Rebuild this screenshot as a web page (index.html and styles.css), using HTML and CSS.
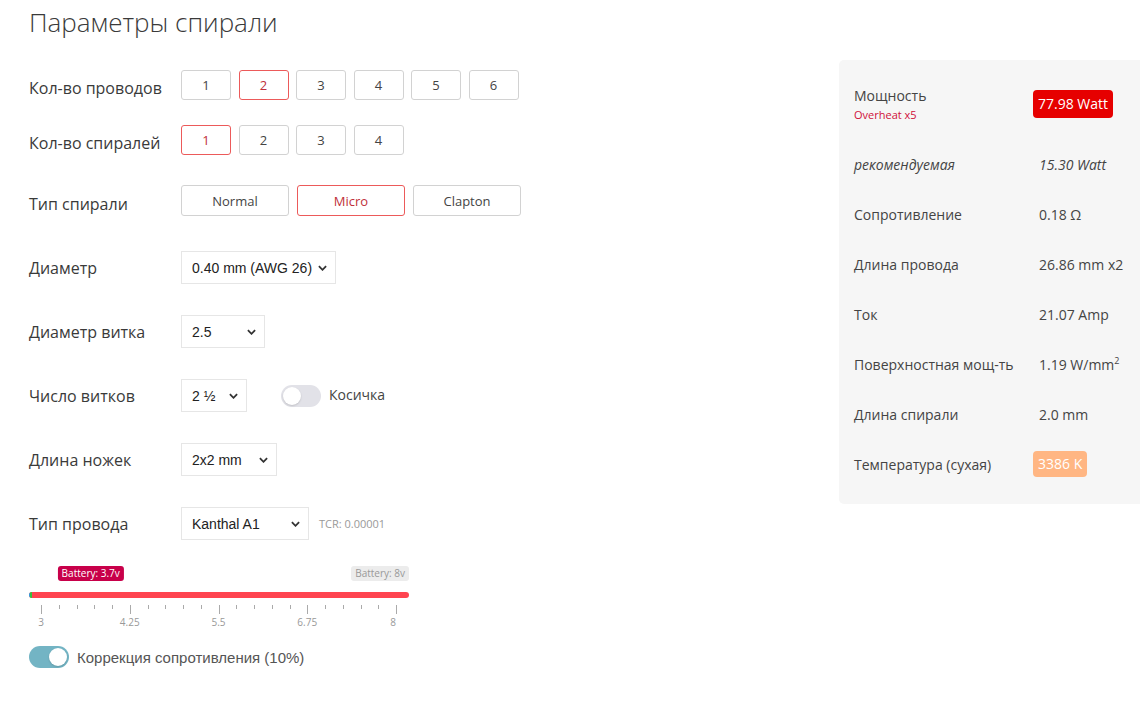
FILE: index.html
```html
<!DOCTYPE html>
<html lang="ru">
<head>
    <meta charset="UTF-8">
    <meta name="viewport" content="width=device-width, initial-scale=1.0">
    <title>Калькулятор спирали</title>
    <link rel="stylesheet" href="styles.css">
</head>
<body>
    <div class="page">
        <h1 class="title">Параметры спирали</h1>

        <div class="layout">
            <div class="params">
                <div class="row row-btn row-wires">
                    <span class="label">Кол-во проводов</span>
                    <div class="btn-group">
                        <button class="opt">1</button>
                        <button class="opt active">2</button>
                        <button class="opt">3</button>
                        <button class="opt">4</button>
                        <button class="opt">5</button>
                        <button class="opt">6</button>
                    </div>
                </div>

                <div class="row row-btn row-coils">
                    <span class="label">Кол-во спиралей</span>
                    <div class="btn-group">
                        <button class="opt active">1</button>
                        <button class="opt">2</button>
                        <button class="opt">3</button>
                        <button class="opt">4</button>
                    </div>
                </div>

                <div class="row row-btn row-type">
                    <span class="label">Тип спирали</span>
                    <div class="btn-group wide">
                        <button class="opt">Normal</button>
                        <button class="opt active">Micro</button>
                        <button class="opt">Clapton</button>
                    </div>
                </div>

                <div class="row">
                    <span class="label">Диаметр</span>
                    <div class="select w-diam">
                        <select><option>0.40 mm (AWG 26)</option></select>
                        <svg class="chevron" viewBox="0 0 10 6"><path d="M1 1l4 4 4-4"/></svg>
                    </div>
                </div>

                <div class="row">
                    <span class="label">Диаметр витка</span>
                    <div class="select w-inner">
                        <select><option>2.5</option></select>
                        <svg class="chevron" viewBox="0 0 10 6"><path d="M1 1l4 4 4-4"/></svg>
                    </div>
                </div>

                <div class="row">
                    <span class="label">Число витков</span>
                    <div class="select w-wraps">
                        <select><option>2 ½</option></select>
                        <svg class="chevron" viewBox="0 0 10 6"><path d="M1 1l4 4 4-4"/></svg>
                    </div>
                    <label class="switch braid">
                        <span class="track"><span class="knob"></span></span>
                        <span class="switch-text">Косичка</span>
                    </label>
                </div>

                <div class="row">
                    <span class="label">Длина ножек</span>
                    <div class="select w-legs">
                        <select><option>2x2 mm</option></select>
                        <svg class="chevron" viewBox="0 0 10 6"><path d="M1 1l4 4 4-4"/></svg>
                    </div>
                </div>

                <div class="row row-last">
                    <span class="label">Тип провода</span>
                    <div class="select w-wire">
                        <select><option>Kanthal A1</option></select>
                        <svg class="chevron" viewBox="0 0 10 6"><path d="M1 1l4 4 4-4"/></svg>
                    </div>
                    <span class="tcr">TCR: 0.00001</span>
                </div>

                <div class="battery">
                    <div class="flags">
                        <span class="flag flag-current" style="left: 14%">Battery: 3.7v</span>
                        <span class="flag flag-max">Battery: 8v</span>
                    </div>
                    <div class="bar"><span class="bar-start"></span></div>
                    <div class="ticks" id="ticks"></div>
                    <div class="scale">
                        <span style="left: 0%">3</span>
                        <span style="left: 25%">4.25</span>
                        <span style="left: 50%">5.5</span>
                        <span style="left: 75%">6.75</span>
                        <span class="scale-end">8</span>
                    </div>
                </div>

                <label class="switch correction">
                    <span class="track on"><span class="knob"></span></span>
                    <span class="switch-text">Коррекция сопротивления (10%)</span>
                </label>
            </div>

            <div class="results">
                <div class="res-row res-power">
                    <div>
                        <div>Мощность</div>
                        <div class="overheat">Overheat x5</div>
                    </div>
                    <div><span class="badge badge-red">77.98 Watt</span></div>
                </div>
                <div class="res-row res-italic">
                    <div>рекомендуемая</div>
                    <div class="val">15.30 Watt</div>
                </div>
                <div class="res-row">
                    <div>Сопротивление</div>
                    <div class="val">0.18 Ω</div>
                </div>
                <div class="res-row">
                    <div>Длина провода</div>
                    <div class="val">26.86 mm x2</div>
                </div>
                <div class="res-row">
                    <div>Ток</div>
                    <div class="val">21.07 Amp</div>
                </div>
                <div class="res-row">
                    <div>Поверхностная мощ-ть</div>
                    <div class="val">1.19 W/mm<sup>2</sup></div>
                </div>
                <div class="res-row">
                    <div>Длина спирали</div>
                    <div class="val">2.0 mm</div>
                </div>
                <div class="res-row">
                    <div>Температура (сухая)</div>
                    <div><span class="badge badge-warm">3386 K</span></div>
                </div>
            </div>
        </div>
    </div>

    <script>
        // Шкала напряжения: 20 делений, каждое пятое крупное
        const ticks = document.getElementById('ticks');
        for (let i = 0; i <= 20; i++) {
            const t = document.createElement('span');
            t.className = i % 5 === 0 ? 'tick major' : 'tick';
            ticks.appendChild(t);
        }
    </script>
</body>
</html>
```

FILE: styles.css
```css
body {
    margin: 0;
    font-family: "Open Sans", Arial, sans-serif;
    color: #333;
    background-color: #fff;
}
.page {
    padding-left: 29px;
}
.title {
    margin: 7px 0 0;
    font-size: 26px;
    line-height: 31px;
    font-weight: 300;
    color: #3a3a3a;
}
.layout {
    display: flex;
    margin-top: 22px;
}
.params {
    width: 810px;
    padding-top: 10px;
}

/* строки параметров */
.row {
    display: flex;
    align-items: center;
    margin-bottom: 31px;
}
.row-wires { margin-bottom: 25px; }
.row-coils { margin-bottom: 30px; }
.row-type { margin-bottom: 35px; }
.row-last { margin-bottom: 26px; }
.label {
    width: 152px;
    flex-shrink: 0;
    font-size: 16px;
    color: #3a3a3a;
}
.row-btn .label {
    padding-top: 6px;
}
.btn-group {
    display: flex;
    gap: 7.5px;
}
.opt {
    width: 50px;
    height: 30px;
    padding: 0;
    background: #fff;
    border: 1px solid #d2d2d2;
    border-radius: 3px;
    font-family: "Open Sans", Arial, sans-serif;
    font-size: 13px;
    color: #444;
}
.wide {
    gap: 8px;
}
.wide .opt {
    width: 108px;
    height: 31px;
}
.opt.active {
    border-color: #ec5a5a;
    color: #c0303a;
}

/* выпадающие списки */
.select {
    position: relative;
    height: 33px;
}
.select select {
    appearance: none;
    -webkit-appearance: none;
    width: 100%;
    height: 33px;
    padding: 0 0 0 10px;
    border: 1px solid #e6e6e6;
    border-radius: 0;
    background: #fff;
    font-family: "Liberation Sans", Arial, sans-serif;
    font-size: 14px;
    color: #222;
}
.chevron {
    position: absolute;
    right: 9px;
    top: 14px;
    width: 9px;
    height: 6px;
    fill: none;
    stroke: #333;
    stroke-width: 2;
    pointer-events: none;
}
.w-diam { width: 155px; }
.w-inner { width: 84px; }
.w-wraps { width: 66px; }
.w-legs { width: 96px; }
.w-wire { width: 128px; }
.tcr {
    margin-left: 10px;
    font-size: 11px;
    color: #999;
}

/* переключатели */
.switch {
    display: flex;
    align-items: center;
    gap: 8px;
}
.braid {
    margin-left: 34px;
}
.track {
    position: relative;
    width: 40px;
    height: 22px;
    border-radius: 11px;
    background-color: #e2e2e8;
}
.knob {
    position: absolute;
    top: 2px;
    left: 2px;
    width: 18px;
    height: 18px;
    border-radius: 50%;
    background-color: #fff;
    box-shadow: 0 1px 2px rgba(0,0,0,0.15);
}
.track.on {
    background-color: #73b4c4;
}
.track.on .knob {
    left: 20px;
}
.switch-text {
    font-size: 14px;
    color: #444;
    padding-bottom: 3px;
}
.correction {
    margin-top: 17px;
}
.correction .switch-text {
    font-family: "Liberation Sans", Arial, sans-serif;
    font-size: 15px;
    color: #555;
    padding-bottom: 0;
}

/* шкала батареи */
.battery {
    width: 380px;
}
.flags {
    position: relative;
    height: 15px;
    margin: 0 13px 0 12px;
}
.flag {
    position: absolute;
    top: 0;
    height: 15px;
    padding: 0 4px;
    border-radius: 3px;
    font-size: 10px;
    line-height: 15px;
    white-space: nowrap;
}
.flag-current {
    transform: translateX(-50%);
    background-color: #c8004a;
    color: #fff;
}
.flag-max {
    right: -13px;
    background-color: #ececec;
    color: #999;
}
.bar {
    position: relative;
    height: 6px;
    margin-top: 11px;
    border-radius: 3px;
    background-color: #ff4450;
    overflow: hidden;
}
.bar-start {
    position: absolute;
    left: 0;
    top: 0;
    width: 3px;
    height: 6px;
    background: linear-gradient(90deg, #2aa0e0 0, #2aa0e0 50%, #35c040 50%);
}
.ticks {
    display: flex;
    justify-content: space-between;
    align-items: flex-start;
    height: 9px;
    margin: 7px 12px 0 12px;
}
.tick {
    width: 1px;
    height: 4px;
    background-color: #aaa;
}
.tick.major {
    height: 9px;
}
.scale {
    position: relative;
    height: 14px;
    margin: 1px 13px 0 12px;
    font-size: 10px;
    line-height: 14px;
    color: #999;
}
.scale span {
    position: absolute;
    top: 0;
    transform: translateX(-50%);
}
.scale .scale-end {
    right: 0;
    transform: none;
}

/* результаты */
.results {
    width: 301px;
    box-sizing: border-box;
    align-self: flex-start;
    padding: 9px 15px 15px;
    background-color: #f6f6f6;
    border-radius: 5px 0 0 5px;
    font-size: 14px;
    color: #444;
}
.res-row {
    display: grid;
    grid-template-columns: 179px 1fr;
    align-items: center;
    height: 50px;
}
.res-row .val {
    padding-left: 6px;
}
.res-power {
    height: 70px;
}
.overheat {
    margin-top: 2px;
    font-size: 11px;
    color: #d0103a;
}
.res-italic {
    font-style: italic;
}
.badge {
    display: inline-block;
    padding: 0 5px;
    border-radius: 4px;
    color: #fff;
}
.badge-red {
    background-color: #e60000;
    line-height: 28px;
}
.badge-warm {
    background-color: #ffb683;
    line-height: 26px;
}
sup {
    font-size: 9px;
    line-height: 0;
}
```
